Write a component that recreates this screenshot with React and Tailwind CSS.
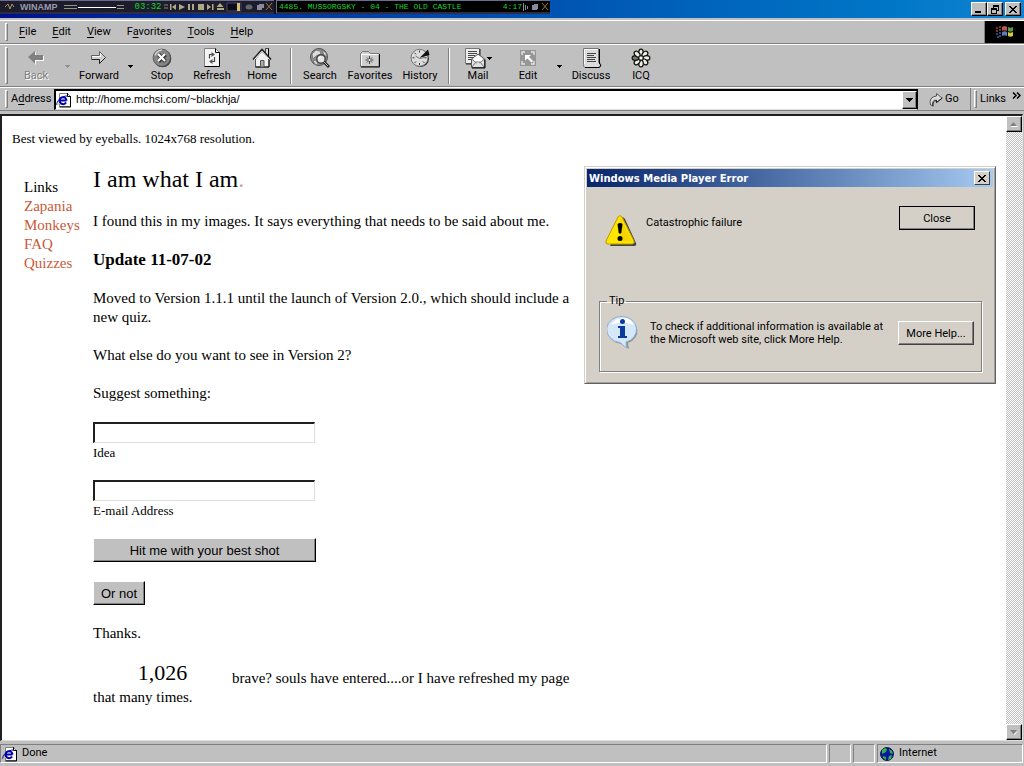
const RAISED =
  'border border-t-white border-l-white border-r-black border-b-black bg-[#c0c0c0] shadow-[inset_-1px_-1px_0_#808080]';

const menuItems = ['File', 'Edit', 'View', 'Favorites', 'Tools', 'Help'];
const menuKeys = { Favorites: 1 };

const siteLinks = ['Zapania', 'Monkeys', 'FAQ', 'Quizzes'];

function Arrow({ color = '#000' }) {
  return (
    <svg width="5" height="3" viewBox="0 0 5 3" shapeRendering="crispEdges" aria-hidden="true">
      <path d="M0 0h5v1h-1v1h-1v1h-1v-1h-1v-1h-1z" fill={color} />
    </svg>
  );
}

function Cross() {
  return (
    <svg width="8" height="7" viewBox="0 0 8 7" shapeRendering="crispEdges" aria-hidden="true">
      <path
        d="M0 0h2v1h1v1h2v-1h1v-1h2v1h-1v1h-1v1h-1v1h1v1h1v1h1v1h-2v-1h-1v-1h-2v1h-1v1h-2v-1h1v-1h1v-1h1v-1h-1v-1h-1v-1h-1z"
        fill="#000"
      />
    </svg>
  );
}

function PageIcon() {
  return (
    <svg width="16" height="16" viewBox="0 0 16 16" aria-hidden="true">
      <path d="M3.500 1.500h8l3 3v10h-11z" fill="#fff" stroke="#808080" />
      <path d="M14.500 4v11h-11M11.500 1v3.500h3" fill="none" stroke="#000" />
      <path d="M10.500 8.500h-7a3.500 3.300 0 1 1 7 0M3.600 9a3.500 3.300 0 0 0 6.500 1.500" fill="none" stroke="#0000a8" strokeWidth="2" />
      <path d="M1 13C-.5 10 6 3.500 11.500 4" fill="none" stroke="#0000a8" />
      <path d="M1 12.500l3-1" stroke="#c8c840" />
    </svg>
  );
}

const icons = {
  Back: (
    <>
      <path d="M3 10l7-6v4h8v5h-8v4z" fill="#fff" />
      <path d="M2 9l7-6v4h8v5H9v4z" fill="#808080" />
    </>
  ),
  Forward: (
    <>
      <path d="M2.500 7.500h8v-4l6 6-6 6v-4h-8z" fill="#d0d0d0" stroke="#606060" />
      <path d="M3 8.500h8.500V5" fill="none" stroke="#fff" />
      <path d="M3 11.500h7.500v4l6-6" fill="none" stroke="#202020" />
    </>
  ),
  Stop: (
    <>
      <circle cx="10.500" cy="10.500" r="8.800" fill="#303030" />
      <circle cx="9.700" cy="9.700" r="8.600" fill="#858585" stroke="#606060" />
      <path d="M3 7.500a8 8 0 0 1 7-5.500" fill="none" stroke="#d0d0d0" strokeWidth="1.500" />
      <path d="M6.500 6.500l7 7M13.500 6.500l-7 7" stroke="#333" strokeWidth="4" />
      <path d="M6 6l7 7M13 6l-7 7" stroke="#fff" strokeWidth="2.200" />
    </>
  ),
  Refresh: (
    <>
      <path d="M2.500 .5h11l4 4v14h-15z" fill="#f4f4f4" stroke="#808080" />
      <path d="M17.500 4.500v14h-15M13.500 .5v4h4" fill="none" stroke="#000" />
      <path d="M7.500 10.500V6.500H10M12.500 9v4.500H10" fill="none" stroke="#444" strokeWidth="1.200" />
      <path d="M9.500 4l3.500 2.500L9.500 9zM10.500 11l-3.500 2.500 3.500 2.500z" fill="#555" />
    </>
  ),
  Home: (
    <>
      <path d="M13.500 .5h3v8h-3z" fill="#ddd" stroke="#444" />
      <path d="M16.500 .5v8" stroke="#000" />
      <path d="M3.500 11L10 3.500l7 7.500v8h-13.500z" fill="#f0f0f0" stroke="#555" />
      <path d="M17 11v8H3.500" fill="none" stroke="#000" />
      <path d="M1 11.500L10 1.500l9 10" fill="none" stroke="#222" strokeWidth="1.600" />
      <path d="M2.500 11.500L10 3.300l7.500 8.200" fill="none" stroke="#fff" />
      <path d="M8.500 12.500h3.500v6.500h-3.500z" fill="#aaa" stroke="#555" />
    </>
  ),
  Search: (
    <>
      <circle cx="9" cy="9" r="8.500" fill="#909090" stroke="#505050" />
      <path d="M2 6l4-4 4 1 1 3-5 2-3 3zM12 2l4 3 1 4-3-2zM3 13l3-1 2 4-2 1z" fill="#dadada" stroke="#666" strokeWidth=".7" />
      <circle cx="11" cy="11" r="4.200" fill="#e4e4e4" stroke="#404040" strokeWidth="1.400" />
      <path d="M8.500 10.500l2-2" stroke="#fff" strokeWidth="1.300" />
      <path d="M14 14l5 5" stroke="#222" strokeWidth="2.800" />
      <path d="M14 14l4 4" stroke="#bbb" />
    </>
  ),
  Favorites: (
    <>
      <path d="M.5 18.500v-13l2-2h6l2 2h8.500v13z" fill="#cfcfcf" stroke="#777" />
      <path d="M1.500 17.500V6.500h17" fill="none" stroke="#fff" />
      <path d="M19.500 6v13H1" fill="none" stroke="#000" />
      <path d="M9.500 8v8M5.500 12h8M7 9.500l5 5M12 9.500l-5 5" stroke="#333" strokeWidth=".9" />
      <circle cx="9.500" cy="12" r="1" fill="#fff" />
    </>
  ),
  History: (
    <>
      <circle cx="10.500" cy="10.500" r="8.500" fill="#222" />
      <circle cx="9.500" cy="9.800" r="8.500" fill="#dcdcdc" stroke="#777" />
      <path d="M9.500 2.500v2M9.500 15v2M2.500 9.800h2M14.500 9.800h2M4.500 4.800l1.500 1.500M4.500 15l1.500-1.500M14.500 15L13 13.500" stroke="#333" />
      <path d="M9.500 10l8.500-8.500 1.500 5.500z" fill="#111" />
      <path d="M5.500 8l4 2.500 5-1" fill="none" stroke="#777" />
    </>
  ),
  Mail: (
    <>
      <path d="M.5 .5h14v15H.5z" fill="#eee" stroke="#777" />
      <path d="M15 1v15H1" fill="none" stroke="#222" />
      <path d="M3 3.500h9M3 5.500h9M3 7.500h7M3 9.500h5M3 11.500h4" stroke="#444" />
      <path d="M6.500 11l6.500-5 6.500 5v8.500h-13z" fill="#e2e2e2" stroke="#555" />
      <path d="M9 10l4-2.500 4 2.500v3l-4 2-4-2z" fill="#fff" />
      <path d="M6.500 19.500l4.500-5.500h4l4.500 5.500M6.500 11l5 4M19.500 11l-5 4" fill="none" stroke="#777" />
      <path d="M20 11.500V20H7" fill="none" stroke="#000" />
    </>
  ),
  Edit: (
    <>
      <path d="M2 2h16v16H2z" fill="#969696" />
      <path d="M4 7V4h3M13 4h3v3M16 13v3h-3M7 16H4v-3" fill="none" stroke="#e8e8e8" strokeWidth="1.300" />
      <path d="M7 7h6l-2 2 4 4-1.500 1.500-4-4-2.500 2z" fill="#fff" />
    </>
  ),
  Discuss: (
    <>
      <path d="M2.500 .5h15v14q3 0 2.500 3-.5 2-3 2H4q-2-.5-1.500-3z" fill="#dcdcdc" stroke="#777" />
      <path d="M3.500 16V1.500h13" fill="none" stroke="#fff" />
      <path d="M18.500 1v15q1.500 0 1 2t-3 1.500H4" fill="none" stroke="#000" />
      <path d="M6 5.500h9M6 7.500h7M6 9.500h9M6 11.500h8M6 13.500h9" stroke="#444" />
    </>
  ),
  ICQ: (
    <>
      {[0, 45, 90, 135, 180, 225, 270, 315].map((deg) => (
        <ellipse
          key={deg}
          cx="10"
          cy="4.500"
          rx="2.300"
          ry="3.400"
          transform={`rotate(${deg} 10 10)`}
          fill={deg === 270 ? '#777' : '#f0f0e4'}
          stroke="#111"
          strokeWidth="1.200"
        />
      ))}
      <circle cx="10" cy="10" r="2" fill="#fff" stroke="#222" strokeWidth=".8" />
    </>
  ),
};

function ToolIcon({ name }) {
  return (
    <svg width="20" height="20" viewBox="0 0 20 20" className="overflow-visible" aria-hidden="true">
      {icons[name]}
    </svg>
  );
}

function ToolButton({ name, disabled, menu }) {
  return (
    <button
      type="button"
      disabled={disabled}
      className={
        "flex w-[50px] shrink-0 flex-col items-center font-['Roboto'] text-[11px] leading-[16px] " +
        (disabled ? 'text-[#808080] [text-shadow:1px_1px_0_#fff]' : '')
      }
    >
      <span className="flex items-center gap-[2px]">
        <ToolIcon name={name} />
        {menu && <Arrow />}
      </span>
      <span>{name}</span>
    </button>
  );
}

function ToolArrow({ label, disabled }) {
  return (
    <button type="button" aria-label={label} className="flex w-[13px] shrink-0 items-center justify-center">
      <Arrow color={disabled ? '#909090' : '#000'} />
    </button>
  );
}

function Divider() {
  return <div className="mx-[3px] w-[2px] shrink-0 border-l border-l-[#808080] border-r border-r-white" />;
}

function Grip() {
  return (
    <div className="w-[3px] shrink-0 self-stretch border border-t-white border-l-white border-r-[#808080] border-b-[#808080]" />
  );
}

function WinampBar() {
  return (
    <div className="flex h-[14px] gap-[2px] bg-[#12121c] font-['Liberation_Mono'] text-[8px] leading-[12px] text-[#18d424]">
      <div className="flex w-[274px] items-center border-t border-t-[#6c6c8c] border-b-2 border-b-[#2c2c44] bg-[#1c1c2c]">
        <svg width="20" height="11" viewBox="0 0 20 11" aria-hidden="true">
          <path d="M5 6l3-3 2 5 2-5 2 3" fill="none" stroke="#a89860" />
        </svg>
        <span className="font-['Liberation_Sans'] text-[9px] font-bold text-[#9a9aa8]">WINAMP</span>
        <svg width="72" height="11" viewBox="0 0 72 11" className="ml-[5px]" shapeRendering="crispEdges" aria-hidden="true">
          <path d="M1 4h13M1 7h13M54 4h7M54 7h7" stroke="#98957c" />
          <path d="M15 6h38" stroke="#fff" />
        </svg>
        <span className="text-[9px]">03:32</span>
        <svg width="112" height="11" viewBox="0 0 112 11" className="shrink-0" aria-hidden="true">
          <path d="M2 4h4M2 7h4" stroke="#888" />
          <g fill="#b0aa84">
            <path d="M8 3h1.500v6H8zM14 3v6l-4-3zM17 3l6 3-6 3zM26 3h2v6h-2zM30 3h2v6h-2zM36 3h6v6h-6zM45 3l4 3-4 3zM50 3h1.500v6H50zM58 2l3.500 4h-7zM55 7h7v2h-7z" />
          </g>
          <path d="M65 2h14v8H65z" fill="#0c0c18" stroke="#44446c" />
          <path d="M75 2h3v8h-3z" fill="#d0c070" />
          <ellipse cx="87" cy="6" rx="3.500" ry="2.500" fill="#666" />
          <path d="M95 4h5v5h-5zM97 3h5v4h-5z" fill="#8a8a9c" />
          <path d="M104 2l6 7M110 2l-6 7" stroke="#9a7a30" />
        </svg>
      </div>
      <div className="flex flex-1 items-center border-t border-l border-t-[#6c6c8c] border-l-[#6c6c8c] border-b-2 border-b-[#2c2c44] bg-black pl-[2px]">
        <span className="whitespace-pre">4485. MUSSORGSKY - 04 - THE OLD CASTLE</span>
        <span className="ml-auto">4:17</span>
        <svg width="28" height="11" viewBox="0 0 28 11" aria-hidden="true">
          <path d="M1.500 2v8M3.500 4v5M5.500 5v3" stroke="#8888a0" />
          <path d="M10 4h5v5h-5zM12 3h4v5h-4z" fill="#8a8a9c" />
          <path d="M20 2l6 7M26 2l-6 7" stroke="#9a7a30" />
        </svg>
      </div>
    </div>
  );
}

function TitleBar() {
  return (
    <header className="flex h-[18px] items-start justify-between bg-linear-to-r from-[#00108c] to-[#1084d0] pr-[3px]">
      <div className="w-[550px]">
        <WinampBar />
      </div>
      <div className="mt-[2px] flex h-[14px]">
        <button type="button" aria-label="Minimize" className={`flex w-4 items-end pb-[2px] pl-[3px] ${RAISED}`}>
          <span className="h-[2px] w-[6px] bg-black" />
        </button>
        <button type="button" aria-label="Restore" className={`flex w-4 items-center justify-center ${RAISED}`}>
          <svg width="9" height="9" viewBox="0 0 9 9" shapeRendering="crispEdges" aria-hidden="true">
            <path d="M2 0h6v6H6V5h1V2H3v1H2zM0 3h6v6H0zM1 5v3h4V5z" fill="#000" fillRule="evenodd" />
          </svg>
        </button>
        <button type="button" aria-label="Close window" className={`ml-[2px] flex w-4 items-center justify-center ${RAISED}`}>
          <Cross />
        </button>
      </div>
    </header>
  );
}

function MenuBar() {
  return (
    <div className="mt-[2px] flex h-6 border-t border-t-white border-b border-b-[#808080]">
      <nav className="flex flex-1 items-center gap-4 py-[2px] pl-[5px] font-['Roboto'] text-[11px]">
        <div className="-mr-[5px] flex self-stretch">
          <Grip />
        </div>
        {menuItems.map((item) => {
          const at = menuKeys[item] ?? 0;
          return (
            <button key={item} type="button">
              {item.slice(0, at)}
              <span className="underline underline-offset-2">{item[at]}</span>
              {item.slice(at + 1)}
            </button>
          );
        })}
      </nav>
      <div className="flex w-[40px] items-center justify-center border-l border-l-[#808080] bg-black">
        <svg width="20" height="16" viewBox="0 0 20 16" aria-hidden="true">
          <path d="M7 3q3-2 5 0v4q-3-1.500-5 0z" fill="#b85848" />
          <path d="M13 3q2 1.500 5 0v4q-3 1.500-5 0z" fill="#5c9848" />
          <path d="M7 8q3-1.500 5 0v4q-3-1.500-5 0z" fill="#5080c0" />
          <path d="M13 8q2 1.500 5 0v4q-3 1.500-5 0z" fill="#d8c840" />
          <path d="M1 4h2M4 3h2M1 7h2M4 6h2" stroke="#a04838" strokeWidth="1.500" />
          <path d="M1 10h2M4 9h2M2 13h2M4 12h2" stroke="#4060a0" strokeWidth="1.500" />
        </svg>
      </div>
    </div>
  );
}

function Toolbar() {
  return (
    <div className="flex h-[43px] border-t border-t-white border-b border-b-[#808080] py-[2px] pl-[5px]">
      <Grip />
      <div className="ml-[3px] flex pt-[1px]">
        <ToolButton name="Back" disabled />
        <ToolArrow label="Back history" disabled />
        <ToolButton name="Forward" />
        <ToolArrow label="Forward history" />
        <ToolButton name="Stop" />
        <ToolButton name="Refresh" />
        <ToolButton name="Home" />
        <Divider />
        <ToolButton name="Search" />
        <ToolButton name="Favorites" />
        <ToolButton name="History" />
        <Divider />
        <ToolButton name="Mail" menu />
        <ToolButton name="Edit" />
        <ToolArrow label="Edit with" />
        <ToolButton name="Discuss" />
        <ToolButton name="ICQ" />
      </div>
    </div>
  );
}

function AddressBar() {
  return (
    <div className="flex h-6 items-center border-t border-t-white border-b border-b-[#808080] pl-[5px] font-['Roboto'] text-[11px]">
      <div className="flex h-[18px]">
        <Grip />
      </div>
      <label htmlFor="address" className="ml-[3px] w-[43px]">
        A<span className="underline underline-offset-2">d</span>dress
      </label>
      <div className="flex h-[21px] flex-1 items-center border-t-2 border-l-2 border-r border-b border-t-black border-l-black border-r-black border-b-[#dfdfdf] bg-white">
        <PageIcon />
        <input
          id="address"
          type="text"
          defaultValue="http://home.mchsi.com/~blackhja/"
          className="ml-[4px] min-w-0 flex-1 bg-transparent font-['Liberation_Sans'] outline-none"
        />
        <button type="button" aria-label="Show addresses" className={`flex h-[18px] w-[15px] items-center justify-center ${RAISED}`}>
          <svg width="7" height="4" viewBox="0 0 7 4" shapeRendering="crispEdges" aria-hidden="true">
            <path d="M0 0h7v1H6v1H5v1H4v1H3V3H2V2H1V1H0z" />
          </svg>
        </button>
      </div>
      <button type="button" className="ml-[11px] flex w-[41px] items-center gap-[2px]">
        <svg width="14" height="15" viewBox="0 0 14 15" aria-hidden="true">
          <path d="M1.500 13q-2-8 6-9V1.500l5.500 4.500-5.500 4.500V8q-5 0-3.500 5.500z" fill="#ddd" stroke="#555" />
          <path d="M4 14.500q-1-5.500 3.500-6v2l6-4.500" fill="none" stroke="#222" />
        </svg>
        Go
      </button>
      <div className="flex h-[22px] items-center border-l border-l-[#808080] pl-[3px]">
        <div className="flex h-[18px]">
          <Grip />
        </div>
        <span className="ml-[3px]">Links</span>
        <button type="button" aria-label="More links" className="mt-[4px] mr-[3px] ml-[6px] self-start">
          <svg width="9" height="7" viewBox="0 0 9 7" className="block" aria-hidden="true">
            <path d="M1 .5l3 3-3 3M5 .5l3 3-3 3" fill="none" stroke="#000" strokeWidth="1.500" />
          </svg>
        </button>
      </div>
    </div>
  );
}

function ErrorDialog() {
  const button =
    'h-6 w-[76px] border border-t-white border-l-white border-r-[#404040] border-b-[#404040] bg-[#d4d0c8] text-[11px] shadow-[inset_-1px_-1px_0_#808080]';
  return (
    <section className="w-[412px] shrink-0 border border-t-[#d4d0c8] border-l-[#d4d0c8] border-r-[#606060] border-b-[#606060] bg-[#d4d0c8] p-[2px] font-['Roboto'] text-[11px] shadow-[inset_1px_1px_0_#fff,inset_-1px_-1px_0_#a0a0a0]">
      <div className="flex h-[18px] items-center justify-between bg-linear-to-r from-[#0a246a] to-[#a6caf0] pr-[3px] pl-[2px]">
        <h2 className="font-['DejaVu_Sans'] text-[10px] font-bold text-white">Windows Media Player Error</h2>
        <button type="button" aria-label="Close dialog" className="flex h-[14px] w-4 items-center justify-center border border-t-white border-l-white border-r-[#404040] border-b-[#404040] bg-[#d4d0c8]">
          <Cross />
        </button>
      </div>
      <div className="flex h-[108px] items-start px-[18px] pt-[19px]">
        <svg width="32" height="34" viewBox="0 0 32 34" className="mt-[8px]" aria-hidden="true">
          <path d="M16 4q2-2 4 1l11 24q1 3-2 3H5z" fill="#444" />
          <path d="M13 3q2-3 4 0l12 24q1 3-2 3H3q-3 0-2-3z" fill="#ffe600" stroke="#b89a00" />
          <path d="M15 2.500l12 25H16z" fill="#f0c800" opacity=".6" />
          <path d="M12.500 10q2.500-2 5 0l-1.200 9q-1.300 1.500-2.600 0z" fill="#000" />
          <circle cx="15" cy="24.500" r="2.500" fill="#000" />
        </svg>
        <p className="mt-[7px] ml-[9px] flex-1">Catastrophic failure</p>
        <button type="button" className={`${button} outline outline-black -outline-offset-1`}>
          Close
        </button>
      </div>
      <fieldset className="mx-[12px] mb-[9px] flex h-[77px] items-start border border-[#808080] px-[7px] shadow-[1px_1px_0_#fff,inset_1px_1px_0_#fff]">
        <legend className="px-[2px] leading-[12px]">Tip</legend>
        <div className="flex pt-[8px]">
          <svg width="34" height="35" viewBox="0 0 34 35" aria-hidden="true">
            <path d="M17 3a15 13 0 0 1 4 25l1 6-7-5A15 13 0 0 1 17 3z" fill="#777" opacity=".7" />
            <path d="M15.500 1.500a14.500 13 0 0 1 3.500 25.500l.5 6-6.500-5.500A14.500 13 0 0 1 15.500 1.500z" fill="#d4e8fa" stroke="#8cacd0" />
            <path d="M4 10q4-7 12-7 8 0 11 7-12-5-23 0z" fill="#fff" />
            <circle cx="15.500" cy="6.500" r="2.500" fill="#0c3a9c" />
            <path d="M11 11h7v10h2v2h-9v-2h2v-8h-2z" fill="#0c3a9c" />
          </svg>
          <p className="mt-[5px] ml-[9px] w-[248px] leading-[13px]">
            To check if additional information is available at
            <br />
            the Microsoft web site, click More Help.
          </p>
          <button type="button" className={`${button} mt-[6px]`}>
            More Help...
          </button>
        </div>
      </fieldset>
    </section>
  );
}

function Field({ id, label, type = 'text' }) {
  return (
    <div className="flex flex-col">
      <input
        id={id}
        type={type}
        className="h-[21px] w-[222px] border-t-2 border-l-2 border-r border-b border-t-[#202020] border-l-[#202020] border-r-[#dfdfdf] border-b-[#dfdfdf] bg-white px-1"
      />
      <label htmlFor={id} className="h-[18px] text-[13px] leading-5">
        {label}
      </label>
    </div>
  );
}

function HomePage() {
  return (
    <main className="min-w-0 flex-1 overflow-hidden bg-white pt-[13px] pr-[10px] pl-[10px] font-['Liberation_Serif'] text-[15px] leading-[19px]">
      <p className="text-[13px]">Best viewed by eyeballs. 1024x768 resolution.</p>
      <div className="mt-[18px] flex items-start">
        <aside className="mt-[12px] w-[69px] shrink-0 pl-[12px] text-[#c8593a]">
          <h2 className="text-black">Links</h2>
          <ul>
            {siteLinks.map((link) => (
              <li key={link}>
                <a href="#">{link}</a>
              </li>
            ))}
          </ul>
        </aside>
        <article className="flex min-w-0 flex-1 flex-col items-start gap-[19px] pl-[12px] pr-[6px]">
          <h1 className="text-2xl leading-[27px]">
            I am what I am<span className="text-[#c8a090]">.</span>
          </h1>
          <p>I found this in my images. It says everything that needs to be said about me.</p>
          <h3 className="text-[17px] leading-5 font-bold">Update 11-07-02</h3>
          <p>Moved to Version 1.1.1 until the launch of Version 2.0., which should include a new quiz.</p>
          <p>What else do you want to see in Version 2?</p>
          <p>Suggest something:</p>
          <Field id="idea" label="Idea" />
          <Field id="email" label="E-mail Address" type="email" />
          <div className="flex flex-col items-start gap-[19px] font-['Liberation_Sans'] text-[13px]">
            <button type="submit" className={`h-6 w-[223px] ${RAISED}`}>
              Hit me with your best shot
            </button>
            <button type="reset" className={`h-6 w-[52px] ${RAISED}`}>
              Or not
            </button>
          </div>
          <div className="flex flex-col gap-[14px]">
            <p>Thanks.</p>
            <p>
              <span className="inline-block w-[139px] text-center align-bottom text-[22px] leading-[31px]">1,026</span>
              <span>brave? souls have entered....or I have refreshed my page</span>
              <br />
              <span>that many times.</span>
            </p>
          </div>
        </article>
        <ErrorDialog />
      </div>
    </main>
  );
}

function ScrollBar() {
  return (
    <div className="flex w-4 shrink-0 flex-col justify-between bg-[repeating-conic-gradient(#c0c0c0_0_25%,#fff_0_50%)] bg-[length:2px_2px]">
      <button type="button" aria-label="Scroll up" className={`flex h-4 items-center justify-center ${RAISED}`}>
        <svg width="8" height="5" viewBox="0 0 8 5" aria-hidden="true">
          <path d="M4 1l4 4H1z" fill="#fff" />
          <path d="M3.500 0L7 4H0z" fill="#808080" />
        </svg>
      </button>
      <button type="button" aria-label="Scroll down" className={`flex h-4 items-center justify-center ${RAISED}`}>
        <svg width="8" height="5" viewBox="0 0 8 5" aria-hidden="true">
          <path d="M8 1L4.500 5 4 4z" fill="#fff" />
          <path d="M0 0h7L3.500 4z" fill="#808080" />
        </svg>
      </button>
    </div>
  );
}

function StatusBar() {
  const panel = 'flex items-center border border-t-[#808080] border-l-[#808080] border-r-white border-b-white';
  return (
    <footer className="mt-[3px] mb-[3px] flex h-[19px] shrink-0 gap-[2px] pr-[1px] font-['Roboto'] text-[11px]">
      <div className={`${panel} flex-1 gap-[4px] pl-[1px]`}>
        <PageIcon />
        Done
      </div>
      <div className={`${panel} w-[22px]`} />
      <div className={`${panel} w-[22px]`} />
      <div className={`${panel} w-[146px] gap-[5px] pl-[2px]`}>
        <svg width="14" height="14" viewBox="0 0 14 14" aria-hidden="true">
          <circle cx="7" cy="7" r="6.500" fill="#0818a0" stroke="#102040" />
          <path d="M2 3l3-2 2 1-1 3-4 2zM9 2l3 2 1 3-3-1zM3 9l3 1v3l-3-2zM9 9l3-1-1 4-3 1z" fill="#38b048" />
        </svg>
        Internet
      </div>
    </footer>
  );
}

export default function App() {
  return (
    <div className="flex h-screen flex-col bg-[#c0c0c0] font-['Liberation_Sans'] text-black">
      <TitleBar />
      <MenuBar />
      <Toolbar />
      <AddressBar />
      <div className="mt-[3px] mr-[1px] flex min-h-0 flex-1 border-t-2 border-l-2 border-r border-b border-t-[#202020] border-l-[#202020] border-r-[#dfdfdf] border-b-[#dfdfdf]">
        <HomePage />
        <ScrollBar />
      </div>
      <StatusBar />
    </div>
  );
}
